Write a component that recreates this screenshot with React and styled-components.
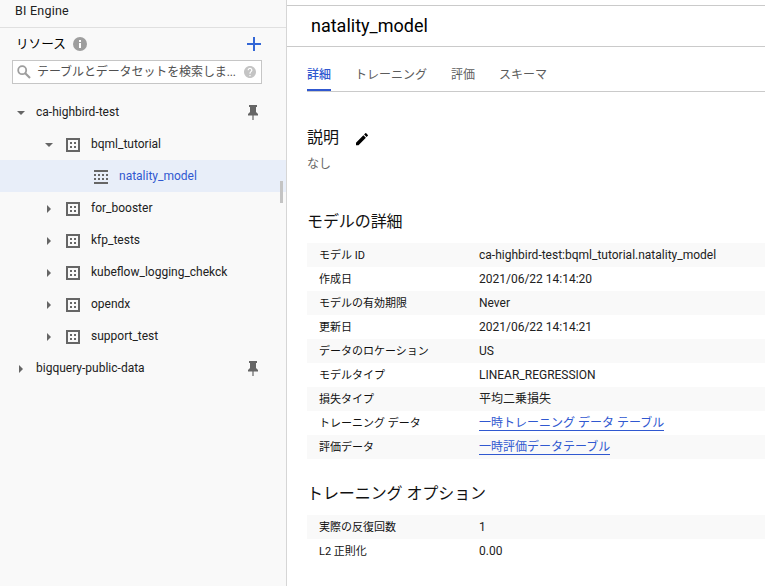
import React from 'react';
import styled, { createGlobalStyle } from 'styled-components';

const GlobalStyle = createGlobalStyle`
  * { box-sizing: border-box; }
  body {
    margin: 0;
    overflow: hidden;
    background: #fff;
    color: #212121;
    font-family: Roboto, "Noto Sans CJK JP", sans-serif;
    font-size: 12px;
  }
`;

const Page = styled.div`
  display: flex;
  width: 765px;
  height: 586px;
  overflow: hidden;
`;

const Sidebar = styled.aside`
  position: relative;
  display: flex;
  flex-direction: column;
  width: 287px;
  flex: none;
  background: #f9f9f9;
  border-right: 1px solid #d6d6d6;
`;

const NavItem = styled.div`
  height: 28px;
  padding: 1px 15px 0;
  font-size: 12.5px;
  letter-spacing: 0.22px;
  line-height: 19px;
  border-bottom: 1px solid #e0e0e0;
`;

const ResourceBar = styled.div`
  display: flex;
  align-items: center;
  height: 32px;
  padding: 0 25px 0 16px;
`;

const ResourceTitle = styled.span`
  flex: 1;
  display: flex;
  align-items: center;
  gap: 7px;
  color: #000;
  font-size: 12.6px;
  line-height: 20px;
`;

const SearchBox = styled.div`
  display: flex;
  align-items: center;
  height: 24px;
  margin: 0 24px 12px 12px;
  padding: 0 5px 0 4px;
  background: #fff;
  border: 1px solid #c6c6c6;
  color: #505050;
`;

const SearchText = styled.span`
  flex: 1;
  padding-left: 6px;
  white-space: nowrap;
  letter-spacing: -0.1px;
  line-height: 18px;
`;

const TreeRow = styled.div`
  display: flex;
  align-items: center;
  height: 32px;
  padding: 1px 27px 0 ${(p) => p.$indent}px;
  background: ${(p) => (p.$active ? '#e8eef9' : 'transparent')};
  color: ${(p) => (p.$active ? '#3058d0' : '#212121')};
`;

const TreeLabel = styled.span`
  flex: 1;
  line-height: 17px;
`;

const Slot = styled.span`
  display: flex;
  width: ${(p) => p.$w}px;
  flex: none;
`;

const ResizeHandle = styled.span`
  position: absolute;
  top: 181px;
  right: 3px;
  width: 3px;
  height: 22px;
  background: #c4c4c4;
`;

const Main = styled.main`
  flex: 1;
  min-width: 0;
  padding-top: 5px;
`;

const Title = styled.h1`
  height: 42px;
  margin: 0;
  padding-left: 24px;
  border-top: 1px solid #cacaca;
  border-bottom: 1px solid #cacaca;
  color: #000;
  font-size: 18px;
  font-weight: 400;
  line-height: 39px;
`;

const Tabs = styled.nav`
  display: flex;
  gap: 24px;
  height: 45px;
  margin-left: 20px;
  border-bottom: 1px solid #cacaca;
`;

const Tab = styled.span`
  height: 44px;
  padding-top: 19px;
  line-height: 18px;
  color: ${(p) => (p.$active ? '#3058d0' : '#5c5c5c')};
  font-weight: ${(p) => (p.$active ? 500 : 400)};
  border-bottom: 2px solid ${(p) => (p.$active ? '#3058d0' : 'transparent')};
`;

const Section = styled.section`
  margin: ${(p) => p.$top}px 0 0 20px;
`;

const Heading = styled.h2`
  display: flex;
  align-items: center;
  gap: 17px;
  margin: 0 0 ${(p) => p.$gap}px;
  color: #111;
  font-size: 16px;
  font-weight: 400;
  letter-spacing: -0.08px;
  line-height: 24px;
`;

const Description = styled.p`
  margin: 0;
  color: #666;
  line-height: 18px;
`;

const DetailRow = styled.div`
  display: flex;
  align-items: center;
  height: 24px;
  padding-left: 12px;
  white-space: nowrap;

  &:nth-of-type(odd) { background: #f9f9f9; }
`;

const Key = styled.span`
  width: 160px;
  padding-top: 1px;
  font-size: 11px;
  line-height: 19px;
  color: #111;
`;

const Value = styled.span`
  line-height: 18px;
`;

const Link = styled.a`
  height: 16px;
  line-height: 16px;
  color: #3058d0;
  border-bottom: 1px solid #3058d0;
`;

const Svg = styled.svg`
  display: block;
  flex: none;
`;

const InfoIcon = () => (
  <Svg width="14" height="14" viewBox="0 0 14 14">
    <circle cx="7" cy="7" r="7" fill="#9e9e9e" />
    <path d="M6 3h2v2H6zM6 6h2v5H6z" fill="#fff" />
  </Svg>
);

const PlusIcon = () => (
  <Svg width="14" height="14" viewBox="0 0 14 14" fill="#3367d6">
    <path d="M6 0h2v6h6v2H8v6H6V8H0V6h6z" />
  </Svg>
);

const SearchIcon = () => (
  <Svg width="14" height="14" viewBox="0 0 14 14" fill="none" stroke="#9e9e9e">
    <circle cx="5.2" cy="5.2" r="4" strokeWidth="1.8" />
    <path d="M8 8l5 5" strokeWidth="2.1" />
  </Svg>
);

const HelpIcon = () => (
  <Svg width="12" height="12" viewBox="2 2 20 20" fill="#c4c4c4">
    <path d="M12 2C6.480 2 2 6.480 2 12s4.480 10 10 10 10-4.480 10-10S17.520 2 12 2zm1 17h-2v-2h2v2zm2.070-7.750l-.9.920C13.450 12.900 13 13.500 13 15h-2v-.5c0-1.100.450-2.100 1.170-2.830l1.240-1.260c.370-.360.590-.860.590-1.410 0-1.100-.9-2-2-2s-2 .9-2 2H8c0-2.210 1.790-4 4-4s4 1.790 4 4c0 .880-.360 1.680-.930 2.250z" />
  </Svg>
);

const Arrow = ({ open }) => (
  <Svg width="8" height="8" viewBox="0 0 8 8" fill="#666">
    <path d={open ? 'M0 2h8L4 6z' : 'M2 0l4 4-4 4z'} />
  </Svg>
);

const DatasetIcon = () => (
  <Svg width="14" height="14" viewBox="0 0 14 14" fill="#666">
    <path fillRule="evenodd" d="M0 0h14v14H0zM2 2v10h10V2zM4 4h2v2H4zM8 4h2v2H8zM4 8h2v2H4zM8 8h2v2H8z" />
  </Svg>
);

const ModelIcon = () => (
  <Svg width="14" height="14" viewBox="0 0 14 14" fill="#666">
    <path d="M0 0h14v2H0zM0 12h14v2H0z" />
    <path d="M0 4h2v2H0zM4 4h2v2H4zM8 4h2v2H8zM12 4h2v2h-2zM0 8h2v2H0zM4 8h2v2H4zM8 8h2v2H8zM12 8h2v2h-2z" />
  </Svg>
);

const PinIcon = () => (
  <Svg width="12" height="15" viewBox="0 0 12 15" fill="#666">
    <path d="M2 0h8v2H9v5l2 2v1.500H6.600V15H5.400v-4.500H1V9l2-2V2H2z" />
  </Svg>
);

const PencilIcon = () => (
  <Svg width="12" height="16" viewBox="3 -1.700 18 24" fill="#000">
    <path d="M3 17.250V21h3.750L17.810 9.940l-3.750-3.750L3 17.250zM20.710 7.040a1 1 0 0 0 0-1.410l-2.340-2.340a1 1 0 0 0-1.410 0l-1.830 1.830 3.750 3.750 1.830-1.830z" />
  </Svg>
);

const tree = [
  { name: 'ca-highbird-test', kind: 'project', open: true },
  { name: 'bqml_tutorial', kind: 'dataset', open: true },
  { name: 'natality_model', kind: 'model' },
  { name: 'for_booster', kind: 'dataset' },
  { name: 'kfp_tests', kind: 'dataset' },
  { name: 'kubeflow_logging_chekck', kind: 'dataset' },
  { name: 'opendx', kind: 'dataset' },
  { name: 'support_test', kind: 'dataset' },
  { name: 'bigquery-public-data', kind: 'project' },
];

const indents = { project: 17, dataset: 45, model: 94 };

const TreeItem = ({ name, kind, open }) => (
  <TreeRow $indent={indents[kind]} $active={kind === 'model'}>
    {kind === 'project' && <Slot $w={19}><Arrow open={open} /></Slot>}
    {kind === 'dataset' && <Slot $w={21}><Arrow open={open} /></Slot>}
    {kind === 'dataset' && <Slot $w={25}><DatasetIcon /></Slot>}
    {kind === 'model' && <Slot $w={25}><ModelIcon /></Slot>}
    <TreeLabel>{name}</TreeLabel>
    {kind === 'project' && <PinIcon />}
  </TreeRow>
);

const details = [
  ['モデル ID', 'ca-highbird-test:bqml_tutorial.natality_model'],
  ['作成日', '2021/06/22 14:14:20'],
  ['モデルの有効期限', 'Never'],
  ['更新日', '2021/06/22 14:14:21'],
  ['データのロケーション', 'US'],
  ['モデルタイプ', 'LINEAR_REGRESSION'],
  ['損失タイプ', '平均二乗損失'],
  ['トレーニング データ', '一時トレーニング データ テーブル', true],
  ['評価データ', '一時評価データテーブル', true],
];

const options = [
  ['実際の反復回数', '1'],
  ['L2 正則化', '0.00'],
];

const DetailTable = ({ rows }) => (
  <div>
    {rows.map(([key, value, link]) => (
      <DetailRow key={key}>
        <Key>{key}</Key>
        {link ? <Link>{value}</Link> : <Value>{value}</Value>}
      </DetailRow>
    ))}
  </div>
);

export default function App() {
  return (
    <Page>
      <GlobalStyle />
      <Sidebar>
        <NavItem>BI Engine</NavItem>
        <ResourceBar>
          <ResourceTitle>リソース<InfoIcon /></ResourceTitle>
          <PlusIcon />
        </ResourceBar>
        <SearchBox>
          <SearchIcon />
          <SearchText>テーブルとデータセットを検索しま...</SearchText>
          <HelpIcon />
        </SearchBox>
        {tree.map((item) => <TreeItem key={item.name} {...item} />)}
        <ResizeHandle />
      </Sidebar>
      <Main>
        <Title>natality_model</Title>
        <Tabs>
          <Tab $active>詳細</Tab>
          <Tab>トレーニング</Tab>
          <Tab>評価</Tab>
          <Tab>スキーマ</Tab>
        </Tabs>
        <Section $top={34}>
          <Heading $gap={5}>説明<PencilIcon /></Heading>
          <Description>なし</Description>
        </Section>
        <Section $top={37}>
          <Heading $gap={9}>モデルの詳細</Heading>
          <DetailTable rows={details} />
        </Section>
        <Section $top={23}>
          <Heading $gap={9}>トレーニング オプション</Heading>
          <DetailTable rows={options} />
        </Section>
      </Main>
    </Page>
  );
}
